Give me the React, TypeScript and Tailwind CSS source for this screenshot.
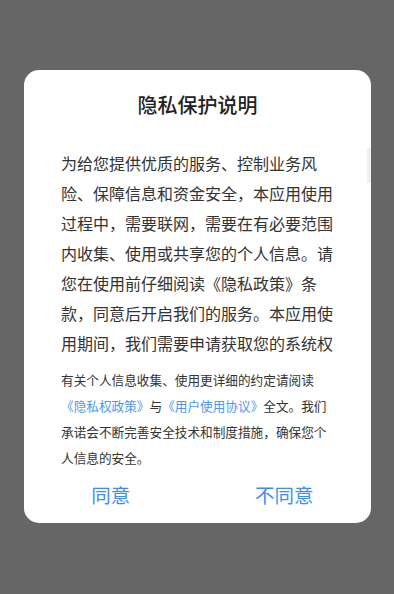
const cjk = { fontFamily: '"Noto Sans CJK SC", "Noto Sans", sans-serif' };

export default function App() {
  return (
    <div className="h-[594px] w-full bg-[#666666] pt-[70px] px-[24px]" style={cjk}>
      <div className="relative w-[347px] rounded-[15px] bg-white pt-[21px]">
        <h1 className="text-center text-[20px] leading-[28px] font-medium text-[#222222]">隐私保护说明</h1>

        <div className="mt-[29px] h-[204px] overflow-hidden px-[37px]">
          <p className="text-[16px] leading-[30px] text-[#333333]">
            为给您提供优质的服务、控制业务风险、保障信息和资金安全，本应用使用过程中，需要联网，需要在有必要范围内收集、使用或共享您的个人信息。请您在使用前仔细阅读《隐私政策》条款，同意后开启我们的服务。本应用使用期间，我们需要申请获取您的系统权限，包括存储、设备信息等，我们将在首次调用时逐项询问您是否允许。
          </p>
        </div>
        {/* scroll thumb */}
        <div className="absolute right-0 top-[78px] h-[35px] w-[4px] bg-[#efefef]" />

        <p className="mt-[15px] px-[37px] text-[12.65px] leading-[26px] text-[#333333]">
          有关个人信息收集、使用更详细的约定请阅读
          <span className="text-[#4d97f0]">《隐私权政策》</span>与
          <span className="text-[#4d97f0]">《用户使用协议》</span>
          全文。我们承诺会不断完善安全技术和制度措施，确保您个人信息的安全。
        </p>

        <div className="flex h-[52px] pb-[4px]">
          <button type="button" className="flex-1 text-[19.5px] text-[#3d8ef0]">同意</button>
          <button type="button" className="flex-1 text-[19.5px] text-[#3d8ef0]">不同意</button>
        </div>
      </div>
    </div>
  );
}
